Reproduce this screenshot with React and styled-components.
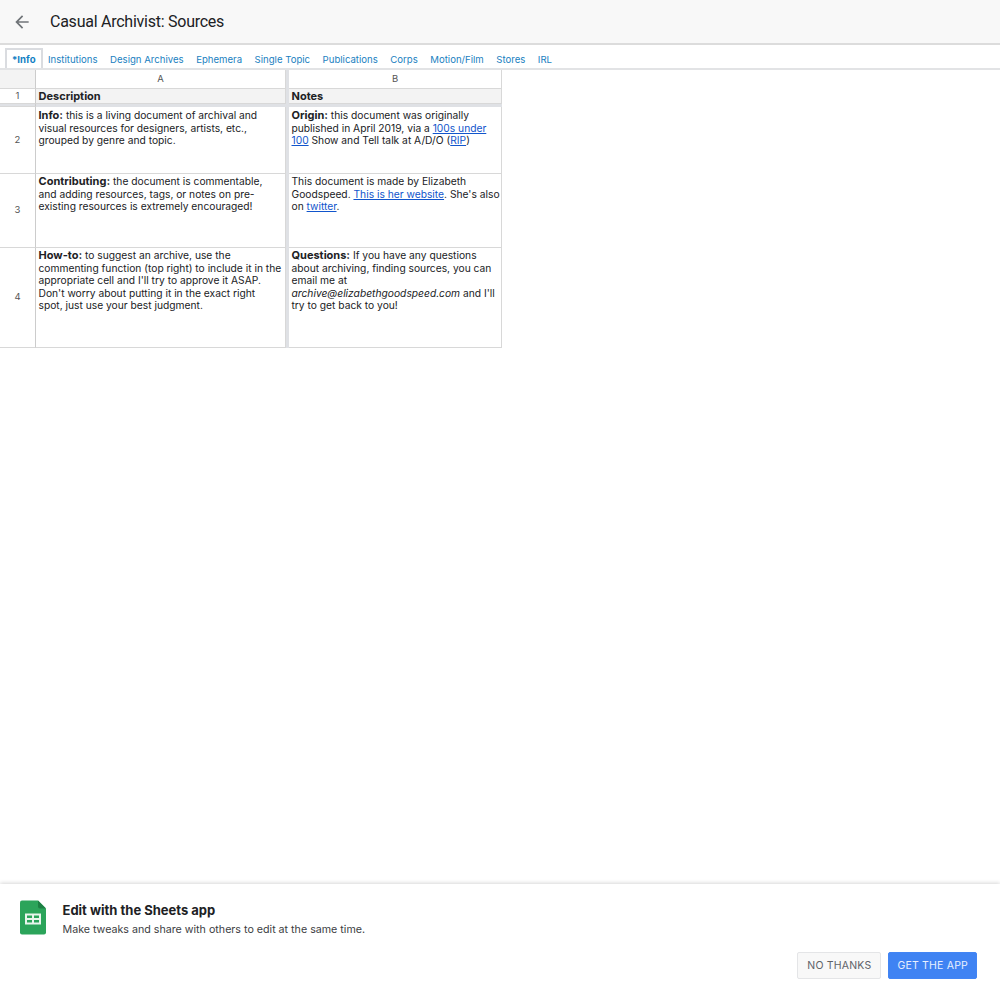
import React from 'react';
import styled, { createGlobalStyle } from 'styled-components';

const tabs = ['Institutions', 'Design Archives', 'Ephemera', 'Single Topic', 'Publications', 'Corps', 'Motion/Film', 'Stores', 'IRL'];

export default function App() {
  return (
    <Page>
      <GlobalStyle />
      <Header>
        <BackIcon viewBox="0 0 24 24">
          <path d="M20 11H7.83l5.59-5.59L12 4l-8 8 8 8 1.41-1.41L7.83 13H20v-2z" />
        </BackIcon>
        <DocTitle>Casual Archivist: Sources</DocTitle>
      </Header>
      <TabBar>
        <ActiveTab>*Info</ActiveTab>
        {tabs.map(t => (
          <Tab key={t}>{t}</Tab>
        ))}
      </TabBar>
      <Sheet>
        <Corner />
        <ColHead>A</ColHead>
        <Freeze />
        <ColHead>B</ColHead>

        <RowHead>1</RowHead>
        <TitleCell>Description</TitleCell>
        <Freeze />
        <TitleCell>Notes</TitleCell>

        <RowHead frozen />
        <FreezeLine />

        <RowHead>2</RowHead>
        <Cell>
          <b>Info:</b> this is a living document of archival and visual resources for designers, artists, etc., grouped by genre and topic.
        </Cell>
        <Freeze />
        <Cell>
          <b>Origin:</b> this document was originally published in April 2019, via a <a href="#a">100s under 100</a> Show and Tell talk at A/D/O (<a href="#b">RIP</a>)
        </Cell>

        <RowHead>3</RowHead>
        <Cell tight>
          <b>Contributing:</b> the document is commentable,<br />and adding resources, tags, or notes on pre-existing resources is extremely encouraged!
        </Cell>
        <Freeze />
        <Cell tight>
          This document is made by Elizabeth Goodspeed. <a href="#c">This is her website</a>. She's also on <a href="#d">twitter</a>.
        </Cell>

        <RowHead>4</RowHead>
        <Cell tight>
          <b>How-to:</b> to suggest an archive, use the commenting function (top right) to include it in the appropriate cell and I'll try to approve it ASAP. Don't worry about putting it in the exact right<br />spot, just use your best judgment.
        </Cell>
        <Freeze />
        <Cell tight>
          <b>Questions:</b> If you have any questions about archiving, finding sources, you can email me at <i>archive@elizabethgoodspeed.com</i> and I'll try to get back to you!
        </Cell>
      </Sheet>
      <Banner>
        <BannerTop>
          <SheetsIcon viewBox="0 0 26 34">
            <path d="M2 0h16l8 8v24a2 2 0 0 1-2 2H2a2 2 0 0 1-2-2V2a2 2 0 0 1 2-2z" fill="#2ba45a" />
            <path d="M18 0l8 8h-6a2 2 0 0 1-2-2V0z" fill="#1c7f43" />
            <path fillRule="evenodd" d="M5 13h16v11H5V13zm2 2v2.6h5V15H7zm7 0v2.6h5V15h-5zm-7 4.4V22h5v-2.6H7zm7 0V22h5v-2.6h-5z" fill="#e8f5ec" />
          </SheetsIcon>
          <div>
            <BannerTitle>Edit with the Sheets app</BannerTitle>
            <BannerText>Make tweaks and share with others to edit at the same time.</BannerText>
          </div>
        </BannerTop>
        <Buttons>
          <Button>NO THANKS</Button>
          <Button primary>GET THE APP</Button>
        </Buttons>
      </Banner>
    </Page>
  );
}

const GlobalStyle = createGlobalStyle`
  html, body {
    margin: 0;
    padding: 0;
    background: #fff;
  }
`;

const Page = styled.div`
  width: 1000px;
  height: 1000px;
  display: flex;
  flex-direction: column;
  overflow: hidden;
  font-family: Inter, 'Liberation Sans', sans-serif;
`;

const Header = styled.div`
  height: 43px;
  flex: none;
  display: flex;
  align-items: center;
  background: #f8f8f8;
  border-bottom: 2px solid #dcdcdc;
`;

const BackIcon = styled.svg`
  width: 20px;
  height: 20px;
  margin-left: 12px;
  fill: #707478;
`;

const DocTitle = styled.div`
  margin-left: 18px;
  font-family: Roboto, sans-serif;
  font-size: 16px;
  letter-spacing: -0.25px;
  color: #202124;
`;

const TabBar = styled.div`
  height: 25px;
  flex: none;
  box-sizing: border-box;
  display: flex;
  align-items: center;
  gap: 12.5px;
  padding: 6px 0 0 5px;
  border-bottom: 2px solid #e2e3e5;
  font-size: 9.6px;
  color: #1a7fbf;
`;

const Tab = styled.div`
  white-space: nowrap;
`;

const ActiveTab = styled.div`
  height: 20px;
  align-self: flex-end;
  margin-right: -7px;
  padding: 0 5px;
  box-sizing: border-box;
  display: flex;
  align-items: center;
  border: 2px solid #dadce0;
  border-bottom: 0;
  font-weight: 700;
  color: #1481c4;
`;

const Sheet = styled.div`
  display: grid;
  grid-template-columns: 36px 250px 3px 213px;
  grid-template-rows: 19px 15px 3px 67px 74px 100px;
  width: 502px;
  font-size: 10.25px;
  line-height: 12.5px;
  color: #202124;

  a {
    color: #1155cc;
    text-decoration: underline;
  }

  b {
    font-size: 11px;
  }
`;

const Corner = styled.div`
  background: #f3f3f3;
  border-right: 1px solid #ccc;
  border-bottom: 1px solid #d8d8d8;
`;

const ColHead = styled.div`
  display: flex;
  align-items: center;
  justify-content: center;
  font-size: 9.5px;
  color: #555;
  border-right: 1px solid #d8d8d8;
  border-bottom: 1px solid #d8d8d8;
`;

const RowHead = styled.div`
  display: flex;
  align-items: center;
  justify-content: center;
  font-size: 9.5px;
  color: #555;
  border-right: 1px solid #ccc;
  border-bottom: 1px solid #d8d8d8;
  background: ${props => (props.frozen ? '#dfe1e5' : '#fff')};
`;

const Freeze = styled.div`
  background: #dfe1e5;
`;

const FreezeLine = styled.div`
  grid-column: 2 / 5;
  background: #dfe1e5;
`;

const Cell = styled.div`
  padding: ${props => (props.tight ? 1 : 2)}px 0 0 2.5px;
  border-right: 1px solid #d8d8d8;
  border-bottom: 1px solid #d8d8d8;
`;

const TitleCell = styled(Cell)`
  padding: 1px 3px 0 2.5px;
  font-size: 11px;
  font-weight: 700;
  background: #f3f3f3;
`;

const Banner = styled.div`
  margin-top: auto;
  height: 116px;
  flex: none;
  box-sizing: border-box;
  padding: 16px 23px 21px 20px;
  display: flex;
  flex-direction: column;
  justify-content: space-between;
  box-shadow: 0 -1px 4px rgba(0, 0, 0, 0.16);
  background: #fff;
`;

const BannerTop = styled.div`
  display: flex;
  gap: 16.5px;
`;

const SheetsIcon = styled.svg`
  width: 26px;
  height: 35px;
  flex: none;
`;

const BannerTitle = styled.div`
  font-size: 13px;
  line-height: 20px;
  font-weight: 700;
  color: #202124;
`;

const BannerText = styled.div`
  font-size: 10.68px;
  line-height: 20px;
  color: #3c4043;
`;

const Buttons = styled.div`
  display: flex;
  justify-content: flex-end;
  gap: 7px;
`;

const Button = styled.div`
  height: 27px;
  box-sizing: border-box;
  padding: 0 ${props => (props.primary ? 8 : 9)}px;
  display: flex;
  align-items: center;
  font-size: 10.5px;
  letter-spacing: 0.2px;
  border-radius: 2px;
  border: 1px solid ${props => (props.primary ? '#4285f4' : '#e4e5e7')};
  background: ${props => (props.primary ? '#3f83f3' : '#f8f8f8')};
  color: ${props => (props.primary ? '#e8f0fe' : '#5f6368')};
`;
